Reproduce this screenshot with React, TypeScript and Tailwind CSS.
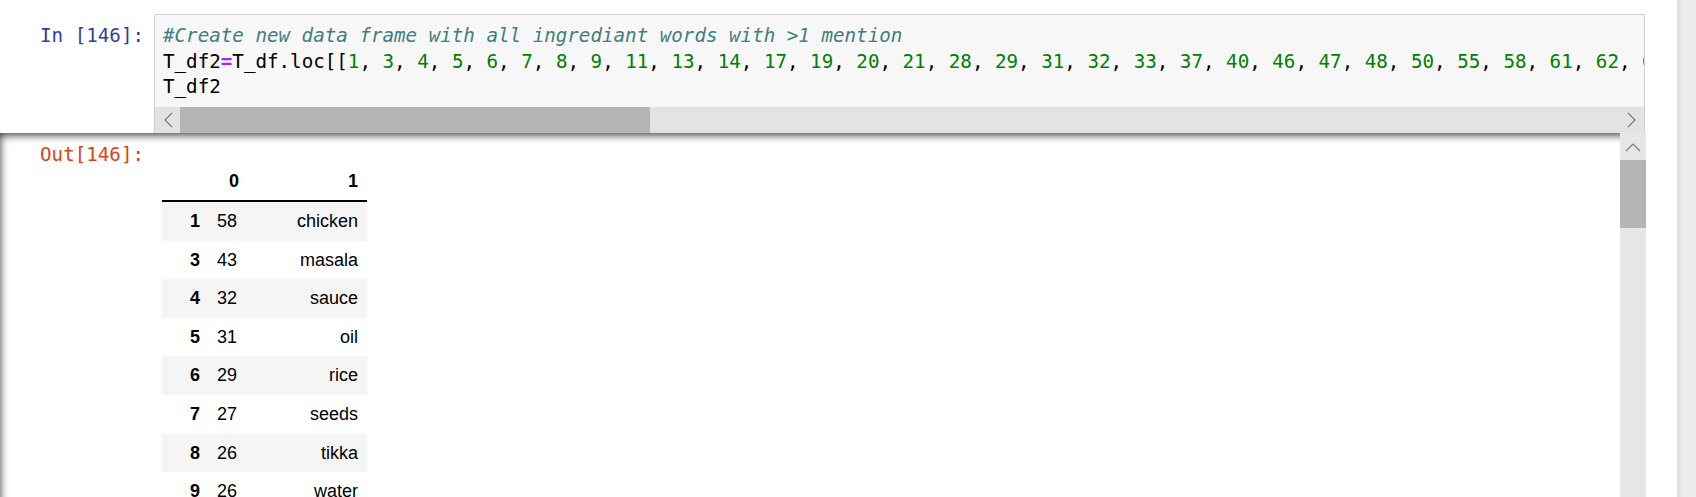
import React from 'react'

const nums = [1, 3, 4, 5, 6, 7, 8, 9, 11, 13, 14, 17, 19, 20, 21, 28, 29, 31, 32, 33, 37, 40, 46, 47, 48, 50, 55, 58, 61, 62, 63, 64, 65, 66, 70]

const rows: [number, number, string][] = [
  [1, 58, 'chicken'],
  [3, 43, 'masala'],
  [4, 32, 'sauce'],
  [5, 31, 'oil'],
  [6, 29, 'rice'],
  [7, 27, 'seeds'],
  [8, 26, 'tikka'],
  [9, 26, 'water'],
  [11, 25, 'onion'],
]

function Chevron({ dir }: { dir: 'left' | 'right' | 'up' }) {
  const pts =
    dir === 'left' ? '9,1 2,8 9,15' : dir === 'right' ? '1,1 8,8 1,15' : '1,9 8,2 15,9'
  const w = dir === 'up' ? 16 : 10
  const h = dir === 'up' ? 10 : 16
  return (
    <svg width={w} height={h} viewBox={`0 0 ${w} ${h}`} fill="none">
      <polyline points={pts} stroke="#7b7b7b" strokeWidth="1.2" />
    </svg>
  )
}

export default function App() {
  return (
    <div className="w-[1696px] h-[497px] overflow-hidden bg-white flex">
      <div className="w-[1677px] flex flex-col">
        {/* input cell */}
        <div className="flex pt-[14px]">
          <div className="w-[154px] shrink-0 pt-[9px] pr-[10px] text-right text-[19.2px] leading-[25.5px] text-[#303f9f] font-['DejaVu_Sans_Mono',monospace] whitespace-pre">
            In [146]:
          </div>
          <div className="w-[1491px] h-[119px] border border-b-0 border-[#cfcfcf] bg-[#f7f7f7] rounded-t-[2px] flex flex-col">
            <div className="h-[92px] pt-[8px] pl-[8px] overflow-hidden whitespace-pre text-[19.2px] leading-[25.5px] text-black font-['DejaVu_Sans_Mono',monospace]">
              <div className="italic text-[#408080]">#Create new data frame with all ingrediant words with &gt;1 mention</div>
              <div>
                T_df2<span className="text-[#aa22ff] font-bold">=</span>T_df.loc[[
                {nums.map((n, i) => (
                  <React.Fragment key={i}>
                    <span className="text-[#008000]">{n}</span>
                    {', '}
                  </React.Fragment>
                ))}
              </div>
              <div>T_df2</div>
            </div>
            <div className="h-[26px] flex bg-[#e3e3e3]">
              <div className="w-[25px] flex items-center justify-center">
                <Chevron dir="left" />
              </div>
              <div className="w-[470px] bg-[#b4b4b4]" />
              <div className="flex-1" />
              <div className="w-[25px] flex items-center justify-center">
                <Chevron dir="right" />
              </div>
            </div>
          </div>
        </div>

        {/* output cell */}
        <div className="relative w-[1646px] h-[380px] shadow-[inset_0_2px_8px_rgba(0,0,0,0.8)] flex">
          <div className="w-[154px] shrink-0 pt-[9px] pr-[10px] text-right text-[19.2px] leading-[25.5px] text-[#d84315] font-['DejaVu_Sans_Mono',monospace] whitespace-pre">
            Out[146]:
          </div>
          <div className="pl-[8px] pt-[29px] text-[18px] leading-[20.6px] text-black font-['Liberation_Sans',Arial,sans-serif]">
            <div className="grid grid-cols-[47px_39px_119px] h-[40px] items-center border-b-2 border-black font-bold">
              <div />
              <div className="text-right pr-[9px]">0</div>
              <div className="text-right pr-[9px]">1</div>
            </div>
            {rows.map(([idx, v, word], i) => (
              <div
                key={idx}
                className={`grid grid-cols-[47px_39px_119px] h-[38.6px] items-center ${i % 2 === 0 ? 'bg-[#f5f5f5]' : 'bg-white'}`}
              >
                <div className="text-right pr-[9px] font-bold">{idx}</div>
                <div className="text-left pl-[8px]">{v}</div>
                <div className="text-right pr-[9px]">{word}</div>
              </div>
            ))}
          </div>

          {/* vertical scrollbar */}
          <div className="absolute right-0 top-0 w-[26px] h-full bg-[#e6e6e6] flex flex-col">
            <div className="h-[27px] flex items-center justify-center">
              <Chevron dir="up" />
            </div>
            <div className="h-[68px] bg-[#b5b5b5]" />
          </div>
        </div>
      </div>
      <div className="w-[19px] h-full bg-[linear-gradient(to_right,#dedede,#ececec_35%,#ededed)]" />
    </div>
  )
}
